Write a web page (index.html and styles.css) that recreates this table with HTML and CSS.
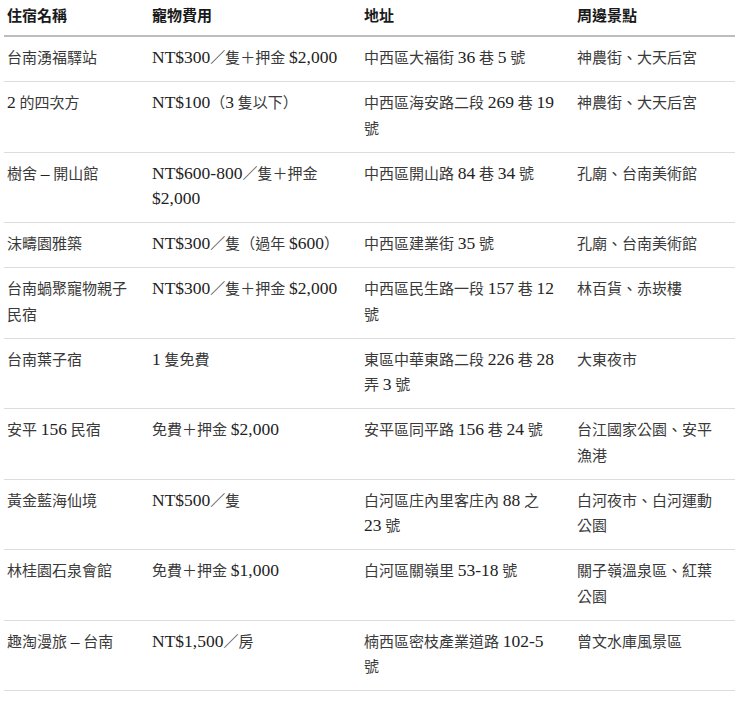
FILE: index.html
```html
<!DOCTYPE html>
<html lang="zh-Hant">
<head>
<meta charset="utf-8">
<title>寵物友善住宿</title>
<link rel="stylesheet" href="styles.css">
</head>
<body>
<table class="stay-table">
  <colgroup>
    <col class="c1"><col class="c2"><col class="c3"><col class="c4">
  </colgroup>
  <thead>
    <tr><th>住宿名稱</th><th>寵物費用</th><th>地址</th><th>周邊景點</th></tr>
  </thead>
  <tbody>
    <tr><td>台南湧福驛站</td><td><span class="lat">NT$300</span>／隻＋押金 <span class="lat">$2,000</span></td><td>中西區大福街 <span class="lat">36</span> 巷 <span class="lat">5</span> 號</td><td>神農街、大天后宮</td></tr>
    <tr><td><span class="lat">2</span> 的四次方</td><td><span class="lat">NT$100</span>（<span class="lat">3</span> 隻以下）</td><td>中西區海安路二段 <span class="lat">269</span> 巷 <span class="lat">19</span> 號</td><td>神農街、大天后宮</td></tr>
    <tr><td>樹舍 <span class="lat">–</span> 開山館</td><td><span class="lat">NT$600-800</span>／隻＋押金 <span class="lat">$2,000</span></td><td>中西區開山路 <span class="lat">84</span> 巷 <span class="lat">34</span> 號</td><td>孔廟、台南美術館</td></tr>
    <tr><td>沫疇園雅築</td><td><span class="lat">NT$300</span>／隻（過年 <span class="lat">$600</span>）</td><td>中西區建業街 <span class="lat">35</span> 號</td><td>孔廟、台南美術館</td></tr>
    <tr><td>台南蝸聚寵物親子民宿</td><td><span class="lat">NT$300</span>／隻＋押金 <span class="lat">$2,000</span></td><td>中西區民生路一段 <span class="lat">157</span> 巷 <span class="lat">12</span> 號</td><td>林百貨、赤崁樓</td></tr>
    <tr><td>台南葉子宿</td><td><span class="lat">1</span> 隻免費</td><td>東區中華東路二段 <span class="lat">226</span> 巷 <span class="lat">28</span> 弄 <span class="lat">3</span> 號</td><td>大東夜市</td></tr>
    <tr><td>安平 <span class="lat">156</span> 民宿</td><td>免費＋押金 <span class="lat">$2,000</span></td><td>安平區同平路 <span class="lat">156</span> 巷 <span class="lat">24</span> 號</td><td>台江國家公園、安平漁港</td></tr>
    <tr><td>黃金藍海仙境</td><td><span class="lat">NT$500</span>／隻</td><td>白河區庄內里客庄內 <span class="lat">88</span> 之 <span class="lat">23</span> 號</td><td>白河夜市、白河運動公園</td></tr>
    <tr><td>林桂園石泉會館</td><td>免費＋押金 <span class="lat">$1,000</span></td><td>白河區關嶺里 <span class="lat">53-18</span> 號</td><td>關子嶺溫泉區、紅葉公園</td></tr>
    <tr><td>趣淘漫旅 <span class="lat">–</span> 台南</td><td><span class="lat">NT$1,500</span>／房</td><td>楠西區密枝產業道路 <span class="lat">102-5</span> 號</td><td>曾文水庫風景區</td></tr>
  </tbody>
</table>
</body>
</html>
```

FILE: styles.css
```css
html, body {
  margin: 0;
  padding: 0;
  background: #ffffff;
}
body {
  font-family: "Liberation Serif", "Noto Sans CJK TC", serif;
  font-size: 15px;
  color: #3a3a3a;
}
.stay-table {
  margin-left: 4px;
  width: 731px;
  border-collapse: collapse;
  table-layout: fixed;
}
.stay-table .c1 { width: 145px; }
.stay-table .c2 { width: 212px; }
.stay-table .c3 { width: 213px; }
.stay-table .c4 { width: 161px; }
.stay-table th,
.stay-table td {
  text-align: left;
  vertical-align: top;
  line-height: 25.5px;
  padding: 9px 16px 9.5px 3px;
}
.stay-table th {
  font-weight: 700;
  color: #1a1a1a;
  padding-top: 4px;
  padding-bottom: 5.5px;
  border-bottom: 2px solid #bdbdbd;
}
.stay-table td {
  border-bottom: 1px solid #dcdcdc;
}
.lat {
  font-size: 17.5px;
  line-height: 1;
  color: #222222;
}
```
